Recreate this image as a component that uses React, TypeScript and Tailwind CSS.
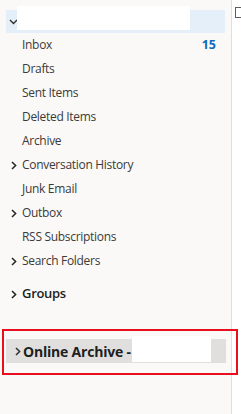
import React from "react";

const folders = [
  { name: "Inbox", count: 15 },
  { name: "Drafts" },
  { name: "Sent Items" },
  { name: "Deleted Items" },
  { name: "Archive" },
  { name: "Conversation History", expandable: true },
  { name: "Junk Email" },
  { name: "Outbox", expandable: true },
  { name: "RSS Subscriptions" },
  { name: "Search Folders", expandable: true },
];

const ChevronRight = ({ className = "" }: { className?: string }) => (
  <svg width="6" height="9" viewBox="0 0 6 9" className={className}>
    <path d="M1 1l3.6 3.5L1 8" fill="none" stroke="currentColor" strokeWidth="1.5" />
  </svg>
);

const ChevronDown = () => (
  <svg width="9" height="6" viewBox="0 0 9 6">
    <path d="M1 1l3.5 3.5L8 1" fill="none" stroke="#323130" strokeWidth="1.4" />
  </svg>
);

export default function App() {
  return (
    <div
      className="flex h-[414px] w-[241px] overflow-hidden bg-white"
      style={{ fontFamily: '"Open Sans", "Noto Sans", sans-serif' }}
    >
      {/* Folder pane */}
      <div className="flex w-[232px] shrink-0 flex-col border-r border-[#e1dfdd] bg-[#faf9f8]">
        {/* Account header */}
        <div className="mx-[6px] mt-[10px] flex h-[23px] items-start bg-[#e4eff9]">
          <div className="ml-[3px] mt-[9px] w-[8px]">
            <ChevronDown />
          </div>
          <div className="-mt-[4px] h-[24px] w-[173px] bg-white" />
        </div>

        {/* Folders */}
        <div className="flex flex-col">
          {folders.map((f) => (
            <div
              key={f.name}
              className="flex h-[24px] items-center pr-[15px] text-[12px] tracking-[-0.3px] text-[#3b3a39]"
            >
              <div className="flex w-[22px] justify-end pr-[5px] text-[#252423]">
                {f.expandable && <ChevronRight />}
              </div>
              <span className="flex-1">{f.name}</span>
              {f.count && (
                <span className="text-[12.5px] font-bold tracking-normal text-[#0f6cbd]">{f.count}</span>
              )}
            </div>
          ))}
        </div>

        {/* Groups */}
        <div className="mt-[9px] flex h-[24px] items-center text-[13px] font-semibold tracking-[-0.3px] text-[#201f1e]">
          <div className="flex w-[22px] justify-end pr-[5px]">
            <ChevronRight />
          </div>
          <span>Groups</span>
        </div>

        {/* Online Archive (annotated) */}
        <div className="ml-[2px] mt-[23px] w-[236px] border-2 border-[#e8101e] pb-[10px] pl-[2px] pt-[8px]">
          <div className="flex h-[24px] w-[220px] items-center bg-[#e1dfdd] text-[14px] font-bold tracking-[-0.2px] text-[#201f1e]">
            <div className="flex w-[16px] justify-end pr-[1px] text-[#323130]">
              <ChevronRight />
            </div>
            <span className="ml-[1px]">Online Archive -</span>
            <div className="-mt-[3px] ml-[1px] h-[26px] w-[79px] self-start bg-white" />
          </div>
        </div>
      </div>

      {/* Message list edge */}
      <div className="flex-1 pl-[3px] pt-[7px]">
        <div className="h-[11px] w-[11px] border border-[#605e5c]" />
      </div>
    </div>
  );
}
